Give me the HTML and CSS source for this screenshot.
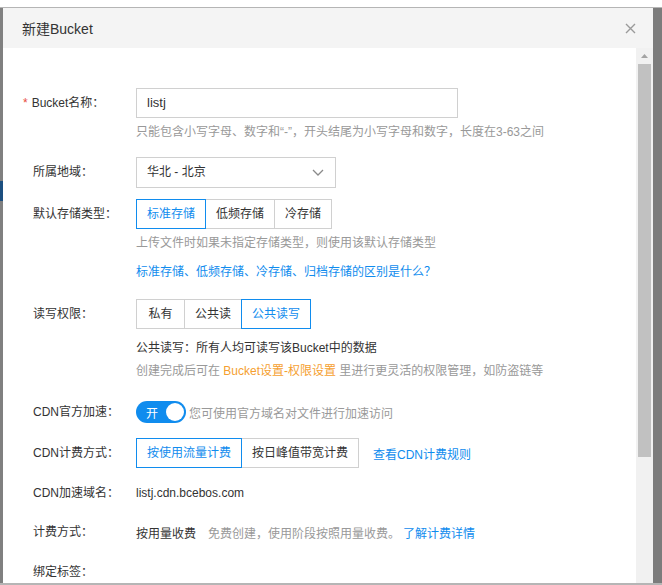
FILE: index.html
```html
<!DOCTYPE html>
<html lang="zh-CN">
<head>
    <meta charset="UTF-8">
    <meta name="viewport" content="width=device-width, initial-scale=1.0">
    <title>新建Bucket</title>
    <link rel="stylesheet" href="styles.css">
</head>
<body>
    <div class="mask">
        <div class="mask-left"><span class="mask-blue"></span></div>

        <div class="dialog">
            <div class="dialog-head">
                <span class="dialog-title">新建Bucket</span>
                <svg class="close" width="11" height="11" viewBox="0 0 11 11">
                    <path d="M1 1L10 10M10 1L1 10" stroke="#9a9a9a" stroke-width="1.4" fill="none"/>
                </svg>
            </div>

            <div class="dialog-main">
                <div class="dialog-body">
                    <div class="row row-first">
                        <div class="label"><span class="req">*</span>Bucket名称：</div>
                        <div class="field">
                            <div class="input">listj</div>
                            <div class="tip">只能包含小写字母、数字和“-”，开头结尾为小写字母和数字，长度在3-63之间</div>
                        </div>
                    </div>

                    <div class="row gap-15">
                        <div class="label">所属地域：</div>
                        <div class="field">
                            <div class="select">
                                华北 - 北京
                                <svg class="chevron" width="12" height="7" viewBox="0 0 12 7">
                                    <path d="M1 1L6 6L11 1" stroke="#8a8a8a" stroke-width="1.3" fill="none"/>
                                </svg>
                            </div>
                        </div>
                    </div>

                    <div class="row gap-11">
                        <div class="label">默认存储类型：</div>
                        <div class="field">
                            <div class="btn-group">
                                <span class="opt active">标准存储</span>
                                <span class="opt">低频存储</span>
                                <span class="opt">冷存储</span>
                            </div>
                            <div class="tip">上传文件时如果未指定存储类型，则使用该默认存储类型</div>
                            <div class="link link-line">标准存储、低频存储、冷存储、归档存储的区别是什么？</div>
                        </div>
                    </div>

                    <div class="row gap-17">
                        <div class="label">读写权限：</div>
                        <div class="field">
                            <div class="btn-group">
                                <span class="opt">私有</span>
                                <span class="opt">公共读</span>
                                <span class="opt active">公共读写</span>
                            </div>
                            <div class="desc">公共读写：所有人均可读写该Bucket中的数据</div>
                            <div class="tip tip-tight">创建完成后可在 <span class="orange">Bucket设置-权限设置</span> 里进行更灵活的权限管理，如防盗链等</div>
                        </div>
                    </div>

                    <div class="row gap-16">
                        <div class="label">CDN官方加速：</div>
                        <div class="field inline">
                            <span class="switch"><span class="switch-text">开</span><span class="knob"></span></span>
                            <span class="grey">您可使用官方域名对文件进行加速访问</span>
                        </div>
                    </div>

                    <div class="row gap-11">
                        <div class="label">CDN计费方式：</div>
                        <div class="field inline">
                            <div class="btn-group">
                                <span class="opt active">按使用流量计费</span>
                                <span class="opt">按日峰值带宽计费</span>
                            </div>
                            <span class="link cdn-link">查看CDN计费规则</span>
                        </div>
                    </div>

                    <div class="row gap-10">
                        <div class="label">CDN加速域名：</div>
                        <div class="field inline">listj.cdn.bcebos.com</div>
                    </div>

                    <div class="row gap-9">
                        <div class="label">计费方式：</div>
                        <div class="field inline">
                            按用量收费
                            <span class="grey fee-note">免费创建，使用阶段按照用量收费。</span>
                            <span class="link">了解计费详情</span>
                        </div>
                    </div>

                    <div class="row gap-10">
                        <div class="label">绑定标签：</div>
                        <div class="field inline"></div>
                    </div>
                </div>

                <div class="scrollbar">
                    <svg class="scroll-up" width="7" height="4" viewBox="0 0 7 4">
                        <path d="M0 4L3.5 0L7 4Z" fill="#a3a3a3"/>
                    </svg>
                    <div class="thumb"></div>
                </div>
            </div>
        </div>

        <div class="mask-right"></div>
    </div>
</body>
</html>
```

FILE: styles.css
```css
body {
    margin: 0;
    background: #fff;
    font-family: "Liberation Sans", "Noto Sans CJK SC", sans-serif;
    font-size: 12px;
    color: #333;
}

.mask {
    margin-top: 7px;
    height: 575px;
    border-top: 1px solid #b5b5b5;
    border-bottom: 2px solid #b5b5b5;
    background: #7f7f7f;
    display: flex;
    overflow: hidden;
}

.mask-left {
    width: 3px;
    background: #808080;
    display: flex;
    flex-direction: column;
}

.mask-blue {
    margin-top: 173px;
    height: 20px;
    background: #1c4f80;
}

.mask-right {
    width: 9px;
    background: #7c7c7c;
}

.dialog {
    width: 650px;
    background: #fff;
    display: flex;
    flex-direction: column;
}

.dialog-head {
    height: 40px;
    background: #f4f4f4;
    display: flex;
    align-items: center;
    justify-content: space-between;
    padding: 0 17px 0 19px;
}

.dialog-title {
    font-size: 14px;
    color: #333;
}

.dialog-main {
    flex: 1;
    display: flex;
    min-height: 0;
}

.dialog-body {
    flex: 1;
    padding: 40px 0 0 30px;
}

.scrollbar {
    width: 17px;
    background: #f1f1f1;
    display: flex;
    flex-direction: column;
    align-items: center;
}

.scroll-up {
    margin-top: 6px;
}

.thumb {
    margin-top: 6px;
    width: 13px;
    height: 393px;
    background: #c1c1c1;
}

.row {
    display: flex;
}

.gap-9 { margin-top: 9px; }
.gap-10 { margin-top: 10px; }
.gap-11 { margin-top: 11px; }
.gap-15 { margin-top: 15px; }
.gap-16 { margin-top: 16px; }
.gap-17 { margin-top: 17px; }

.label {
    width: 103px;
    flex-shrink: 0;
    line-height: 30px;
    color: #333;
}

.req {
    color: #e84c3d;
    margin-left: -10px;
    margin-right: 4px;
}

.field {
    flex: 1;
}

.field.inline {
    display: flex;
    align-items: center;
    height: 30px;
}

.input {
    width: 310px;
    height: 28px;
    line-height: 28px;
    border: 1px solid #d0d0d0;
    padding-left: 10px;
    font-size: 13px;
    color: #333;
}

.select {
    width: 188px;
    height: 29px;
    line-height: 29px;
    border: 1px solid #d0d0d0;
    padding-left: 10px;
    display: flex;
    align-items: center;
    justify-content: space-between;
}

.chevron {
    margin-right: 11px;
}

.tip {
    margin-top: 4px;
    line-height: 20px;
    color: #999;
}

.tip-tight {
    margin-top: 3px;
}

.desc {
    margin-top: 9px;
    line-height: 20px;
    color: #333;
}

.link {
    color: #108cee;
}

.link-line {
    margin-top: 9px;
    line-height: 20px;
}

.orange {
    color: #f5a030;
}

.btn-group {
    display: flex;
}

.opt {
    min-width: 49px;
    box-sizing: border-box;
    text-align: center;
    height: 30px;
    line-height: 28px;
    padding: 0 10px;
    border: 1px solid #d0d0d0;
    margin-left: -1px;
    color: #333;
    background: #fff;
}

.opt:first-child {
    margin-left: 0;
}

.opt.active {
    border-color: #108cee;
    color: #108cee;
    position: relative;
}

.switch {
    width: 50px;
    height: 22px;
    border-radius: 11px;
    background: #108cee;
    display: flex;
    align-items: center;
    justify-content: space-between;
    padding: 0 2px 0 10px;
    box-sizing: border-box;
    margin-right: 3px;
}

.switch-text {
    color: #fff;
    font-size: 12px;
}

.knob {
    width: 18px;
    height: 18px;
    border-radius: 50%;
    background: #fff;
}

.grey {
    color: #999;
}

.cdn-link {
    margin-left: 14px;
}

.fee-note {
    margin-left: 12px;
    margin-right: 3px;
}
```
